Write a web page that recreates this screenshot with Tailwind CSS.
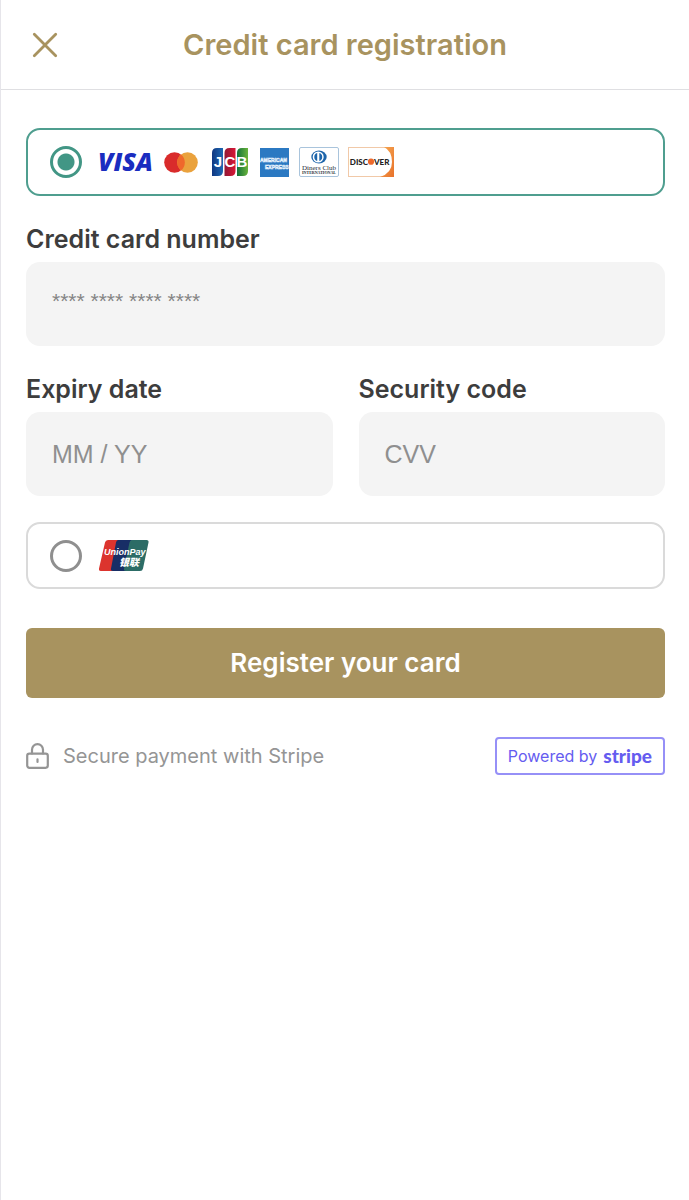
<!DOCTYPE html>
<html lang="en">
<head>
<meta charset="utf-8">
<meta name="viewport" content="width=device-width, initial-scale=1">
<title>Credit card registration</title>
<script src="https://cdn.jsdelivr.net/npm/@tailwindcss/browser@4"></script>
</head>
<body class="min-h-screen border-l border-[#e6e5ea] bg-white font-['Inter','Noto_Sans_CJK_JP',sans-serif] text-[#3d3d3d]">
<header class="grid h-[90px] grid-cols-[66px_1fr_66px] items-center border-b border-[#dfdfe2]">
  <button type="button" aria-label="Close" class="flex size-11 items-center justify-center justify-self-end text-[#a8935f]">
    <svg class="size-[26px]" viewBox="0 0 26 26" fill="none" stroke="currentColor" stroke-width="2.8" stroke-linecap="round"><path d="M2.3 2.3 23.7 23.7M23.7 2.3 2.3 23.7"/></svg>
  </button>
  <h1 class="text-center text-[29px] leading-9 font-semibold text-[#a8935f]">Credit card registration</h1>
</header>
<main class="pt-[38px] pr-6 pl-[25px]">
  <form>
    <label class="flex h-[68px] items-center rounded-[14px] border-2 border-[#4f9e8f] px-[22px]">
      <input type="radio" name="brand" checked aria-label="Visa, Mastercard, JCB, American Express, Diners Club or Discover" class="size-8 shrink-0 appearance-none rounded-full border-[3px] border-[#8f8f8f] bg-white checked:border-[#429685] checked:bg-[radial-gradient(circle,#429685_8px,white_9px)]">
      <svg class="ml-[14px] h-6 w-14" viewBox="0 0 56 24" role="img" aria-label="Visa"><text x="2" y="21" font-family="Open Sans" font-size="25" font-weight="800" font-style="italic" fill="#1a2dc0">VISA</text></svg>
      <svg class="ml-3 h-[21px] w-[34px]" viewBox="0 0 34 21" role="img" aria-label="Mastercard"><circle cx="10.500" cy="10.500" r="10.300" fill="#d92b2b"/><circle cx="23.500" cy="10.500" r="10.300" fill="#eaa23d"/><path d="M17 2.500a10.300 10.300 0 0 1 0 16 10.300 10.300 0 0 1 0-16" fill="#ef682b"/></svg>
      <svg class="ml-[14px] h-7 w-9" viewBox="0 0 36 28" role="img" aria-label="JCB">
        <defs>
          <linearGradient id="jb"><stop stop-color="#103781"/><stop offset="1" stop-color="#1c68b4"/></linearGradient>
          <linearGradient id="jr"><stop stop-color="#8f1835"/><stop offset="1" stop-color="#da1735"/></linearGradient>
          <linearGradient id="jg"><stop stop-color="#137239"/><stop offset="1" stop-color="#69b33c"/></linearGradient>
        </defs>
        <path fill="url(#jb)" d="M5 0h6v23q0 5-5 5H0V5q0-5 5-5"/><path fill="url(#jr)" d="M17.500 0h6v23q0 5-5 5h-6V5q0-5 5-5"/><path fill="url(#jg)" d="M30 0h6v23q0 5-5 5h-6V5q0-5 5-5"/>
        <g font-family="Liberation Sans" font-weight="700" font-size="15" fill="#fff" text-anchor="middle"><text x="6" y="19">J</text><text x="18" y="19">C</text><text x="30" y="19">B</text></g>
      </svg>
      <svg class="ml-3 h-[29px] w-[29px]" viewBox="0 0 29 29" role="img" aria-label="American Express"><path fill="#2b79c2" d="M0 0h29v29H0z"/><g font-family="Liberation Sans" font-weight="700" font-size="5" fill="none" stroke="#e3effa" stroke-width=".6"><text x="0" y="14">AMERICAN</text><text x="5" y="21">EXPRESS</text></g></svg>
      <svg class="ml-[10px] h-[30px] w-10" viewBox="0 0 40 30" role="img" aria-label="Diners Club International"><rect x=".5" y=".5" width="39" height="29" rx="1.500" fill="#fff" stroke="#a9c4dc"/><ellipse cx="20" cy="10" rx="7.700" ry="6.500" fill="#1d65ab"/><circle cx="19.200" cy="10" r="5.500" fill="#fff"/><path d="M18.200 6a4.200 4.200 0 0 0 0 8zM20.300 6a4.200 4.200 0 0 1 0 8z" fill="#1d65ab"/><g font-family="Liberation Serif" fill="#252b35" text-anchor="middle"><text x="20" y="22.500" font-size="7">Diners Club</text><text x="20" y="27" font-size="4" font-weight="700">INTERNATIONAL</text></g></svg>
      <svg class="ml-[9px] h-[30px] w-[46px]" viewBox="0 0 46 30" role="img" aria-label="Discover"><defs><linearGradient id="do" x2="1" y2="1"><stop stop-color="#f7ac55"/><stop offset="1" stop-color="#e8722b"/></linearGradient></defs><rect x=".5" y=".5" width="45" height="29" fill="#fff" stroke="#f1c9a8"/><path fill="url(#do)" d="M36 0h10v30H32q12-4 12-15T36 0"/><g font-family="Lato" font-weight="900" font-size="8" fill="#222"><text x="20" y="17.500" text-anchor="end">DISC</text><text x="26" y="17.500">VER</text></g><circle cx="23" cy="14.700" r="3.100" fill="#ed692c"/></svg>
    </label>

    <label for="number" class="mt-[25px] block text-[25px] leading-9 font-semibold">Credit card number</label>
    <input id="number" inputmode="numeric" autocomplete="cc-number" placeholder="**** **** **** ****" class="mt-[5px] block h-[84px] w-full rounded-[14px] bg-[#f4f4f4] px-[26px] pb-[6px] font-['Liberation_Sans',sans-serif] text-[21px] placeholder:text-[#858585]">

    <div class="mt-[25px] grid grid-cols-2 gap-[26px]">
      <div>
        <label for="expiry" class="block text-[25px] leading-9 font-semibold">Expiry date</label>
        <input id="expiry" inputmode="numeric" autocomplete="cc-exp" placeholder="MM / YY" class="mt-[5px] block h-[84px] w-full rounded-[14px] bg-[#f4f4f4] px-[26px] font-['Liberation_Sans',sans-serif] text-[25px] placeholder:text-[#8f8f8f]">
      </div>
      <div>
        <label for="cvv" class="block text-[25px] leading-9 font-semibold">Security code</label>
        <input id="cvv" inputmode="numeric" autocomplete="cc-csc" placeholder="CVV" class="mt-[5px] block h-[84px] w-full rounded-[14px] bg-[#f4f4f4] px-[26px] font-['Liberation_Sans',sans-serif] text-[25px] placeholder:text-[#8f8f8f]">
      </div>
    </div>

    <label class="mt-[26px] flex h-[67px] items-center rounded-[14px] border-2 border-[#dadada] px-[22px]">
      <input type="radio" name="brand" aria-label="UnionPay" class="size-8 shrink-0 appearance-none rounded-full border-[3px] border-[#8f8f8f] bg-white checked:border-[#429685] checked:bg-[radial-gradient(circle,#429685_8px,white_9px)]">
      <svg class="ml-[17px] h-[31px] w-[50px]" viewBox="0 0 50 31" role="img" aria-label="UnionPay"><path fill="#dc342e" d="M9 0h13l-6 31H2q-2.500 0-2-2.500L6 2.500Q6.500 0 9 0"/><path fill="#182e66" d="M19 0h14l-6 31H14q-2.500 0-2-2.500L17 2.500Q17.500 0 19 0"/><path fill="#2c6c66" d="M33 0h14.500q2.500 0 2 2.500L44 28.500q-.5 2.500-3 2.500H27q-2.500 0-2-2.500L30.500 2.500Q31 0 33 0"/><g fill="#fff" font-weight="700" font-style="italic"><text x="5" y="14.500" font-family="Liberation Sans" font-size="9">UnionPay</text><text x="20" y="25.500" font-family="Noto Sans CJK SC" font-size="10" font-weight="900">银联</text></g></svg>
    </label>

    <button type="submit" class="mt-[39px] block h-[70px] w-full rounded-md bg-[#a8935f] text-[26px] leading-9 font-semibold text-white">Register your card</button>
  </form>
  <footer class="mt-[39px] flex items-center justify-between">
    <p class="flex items-center gap-[14px] text-[20px] leading-7 text-[#959595]">
      <svg class="h-[26px] w-[23px]" viewBox="0 0 23 26" fill="none" stroke="currentColor" stroke-width="2.200" stroke-linecap="round"><rect x="1.200" y="10.600" width="20.600" height="14.200" rx="2.200"/><path d="M6 10.500V6.700a5.500 5.500 0 0 1 11 0v3.800M11.500 16.300v2.700"/></svg>
      Secure payment with Stripe
    </p>
    <a href="#" class="flex h-[38px] items-center gap-[6px] rounded-[4px] border-2 border-[#9690f7] px-[11px] text-[16px] leading-6 text-[#655cf0]">Powered by <span class="font-['Lato',sans-serif] text-[19px] font-black">stripe</span></a>
  </footer>
</main>
</body>
</html>
